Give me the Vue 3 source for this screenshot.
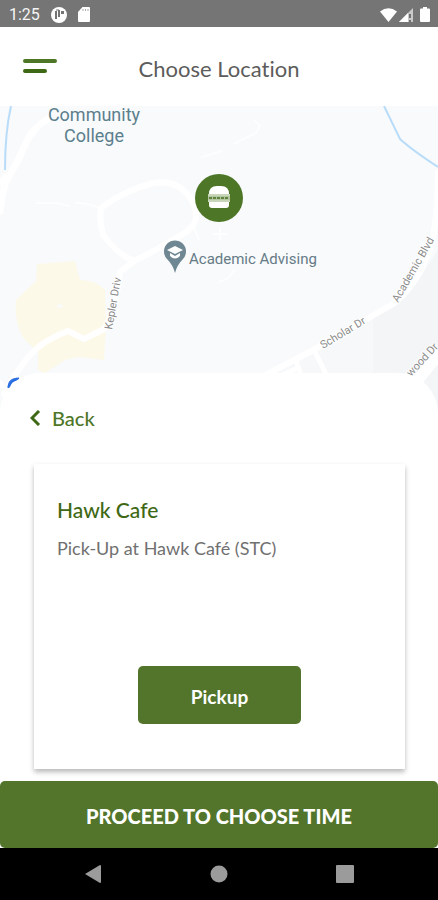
<script setup>
const place = {
  name: 'Hawk Cafe',
  detail: 'Pick-Up at Hawk Café (STC)'
}
</script>

<template>
  <div class="screen">
    <div class="status">
      <div class="group">
        <span class="clock">1:25</span>
        <svg width="16" height="16" viewBox="0 0 16 16" aria-hidden="true">
          <circle cx="8" cy="8" r="8" fill="#fff" />
          <path d="M5 4v8M8 3v7" stroke="#757575" stroke-width="2" fill="none" />
          <path d="M10 4h3v3h-3z" fill="#757575" />
          <path d="M5 3h3" stroke="#757575" stroke-width="1" />
        </svg>
        <svg width="12" height="15" viewBox="0 0 12 15" aria-hidden="true">
          <path d="M4.500 0H11a1 1 0 0 1 1 1v13a1 1 0 0 1-1 1H1a1 1 0 0 1-1-1V5z" fill="#fff" />
          <path d="M5 2v2M7.500 2v2M10 2v2" stroke="#aaa" />
        </svg>
      </div>
      <div class="group signals">
        <svg width="17" height="14" viewBox="0 0 17 14" aria-hidden="true">
          <path d="M0 3.500Q8.500-3 17 3.500L8.500 14z" fill="#fff" />
        </svg>
        <svg class="cell" width="14" height="14" viewBox="0 0 14 14" aria-hidden="true">
          <path d="M14 0v14H0z" fill="#c9c9c9" />
          <path d="M9 5v9H0z" fill="#fff" />
          <path d="M11 6v4M11 12v2" stroke="#707070" stroke-width="2" />
        </svg>
        <svg width="10" height="15" viewBox="0 0 10 15" aria-hidden="true">
          <path d="M3 0h4v1.500h2a1 1 0 0 1 1 1V14a1 1 0 0 1-1 1H1a1 1 0 0 1-1-1V2.500a1 1 0 0 1 1-1h2z" fill="#fff" />
        </svg>
      </div>
    </div>

    <header class="header">
      <button class="menu" type="button" aria-label="Menu">
        <span class="bar long"></span>
        <span class="bar short"></span>
      </button>
      <h1>Choose Location</h1>
    </header>

    <svg class="map" viewBox="0 106 438 304" preserveAspectRatio="xMidYMin slice" role="img" aria-label="Campus map">
      <rect y="106" width="438" height="304" fill="#f8fafc" />
      <path d="M373 317L392 306L416 284L438 250V410H373z" fill="#f3f5f7" />
      <path d="M268 377L315 353L373 317V410H268z" fill="#f6f8fa" />
      <path d="M37 264L75 261L80 280Q96 280 105 290L106 325L104 360L78 357L65 360L45 373L38 370V352L25 340Q14 325 16 300L36 281z" fill="#fdf9e9" />
      <path d="M56 306l5-2 2 2-4 2z" fill="#f8fafc" />
      <g fill="none" stroke="#fff" stroke-linejoin="round" stroke-linecap="round">
        <path d="M48 119Q32 128 25 145T8 178Q3 186 0 211" stroke-width="7" />
        <path d="M0 183l5-7" stroke-width="5" />
        <path d="M101 208Q123 191 153 183Q180 179 192 201T181 235Q159 249 134 261Q117 254 103 235Q99 218 101 208z" stroke-width="6" />
        <path d="M37 203h20l12 3M76 203q15 0 24 6M234 144l23-12 3-6-5-5M202 157l20-6M194 228l5 12M214 234h13M220 228v12M219 282q12-3 15-12" stroke-width="2" opacity=".7" />
        <path d="M134 261L120 272Q116 310 104 329L84 339L68 331Q45 340 35 350T15 375L4 394" stroke-width="6" />
        <path d="M0 383l10 10" stroke-width="6" />
        <path d="M264 376L315 349L365 320L393 304Q415 287 426 259Q437 240 438 173" stroke-width="6" />
        <path d="M296 360l5 16M314 350l13 26M280 376l18-8" stroke-width="5" />
        <path d="M400 402L445 347" stroke-width="11" />
      </g>
      <g fill="none" stroke="#b9dcf8" stroke-width="2">
        <path d="M11 106Q5 132 5 170" />
        <path d="M384 106L400 139Q412 150 438 167" />
      </g>
      <path d="M9 388Q9 379 19 379" fill="none" stroke="#2b6fe0" stroke-width="3" />
      <g class="poi" text-anchor="middle">
        <text x="94" y="121">Community</text>
        <text x="94" y="142">College</text>
      </g>
      <text class="poi small" x="189" y="264">Academic Advising</text>
      <g class="road">
        <text transform="translate(112 330) rotate(-80)">Kepler Driv</text>
        <text transform="translate(323 349) rotate(-31)">Scholar Dr</text>
        <text transform="translate(398 303) rotate(-60)">Academic Blvd</text>
        <text transform="translate(411 377) rotate(-47)">wood Dr</text>
      </g>
      <path d="M175 273Q173 265 167 259A11 11 0 1 1 183 259Q177 265 175 273z" fill="#6f8792" />
      <path d="M167 250L175 246L183 250L175 254z" fill="#fff" />
      <path d="M170 253L175 256L180 253V256Q175 261 170 256z" fill="#fff" />
      <circle cx="219" cy="198" r="24" fill="#4d7627" />
      <path d="M209 194Q209 186 217 186H221Q229 186 229 194z" fill="#fff" />
      <path d="M208 194h22v8h-22z" fill="#b4c6a1" />
      <path d="M208 195h22M208 201h22" stroke="#dce5d3" />
      <path d="M209 198h20" fill="none" stroke="#60833f" stroke-width="2" stroke-dasharray="3 1" />
      <path d="M209 202H229V205Q229 208 226 208H212Q209 208 209 205z" fill="#fff" />
    </svg>

    <main class="sheet">
      <button class="back" type="button">
        <svg width="11" height="16" viewBox="0 0 11 16" aria-hidden="true">
          <path d="M9 1L2 8l7 7" fill="none" stroke="#3e6814" stroke-width="3" />
        </svg>
        <span>Back</span>
      </button>
      <section class="card">
        <h2>{{ place.name }}</h2>
        <p>{{ place.detail }}</p>
        <button class="pickup" type="button">Pickup</button>
      </section>
    </main>

    <button class="proceed" type="button">PROCEED TO CHOOSE TIME</button>

    <nav class="system">
      <button type="button" aria-label="System back">
        <svg width="18" height="20" viewBox="0 0 18 20"><path d="M1 10L16 1q1 0 1 1v16q0 1-1 1z" fill="#9b9b9b" /></svg>
      </button>
      <button type="button" aria-label="Home">
        <svg width="18" height="18" viewBox="0 0 18 18"><circle cx="9" cy="9" r="8.500" fill="#9b9b9b" /></svg>
      </button>
      <button type="button" aria-label="Recent apps">
        <svg width="18" height="18" viewBox="0 0 18 18"><rect width="18" height="18" rx="1" fill="#9b9b9b" /></svg>
      </button>
    </nav>
  </div>
</template>

<style>
body {
  margin: 0;
  background: #fff;
}
</style>

<style scoped>
.screen {
  display: flex;
  flex-direction: column;
  min-height: 100vh;
  font-family: Lato, "Open Sans", sans-serif;
  font-variant-ligatures: none;
  background: #fff;
}
svg {
  display: block;
}
button {
  padding: 0;
  border: 0;
  background: none;
  font-family: inherit;
  cursor: pointer;
}
.status {
  display: flex;
  align-items: center;
  justify-content: space-between;
  height: 27px;
  padding: 2px 8px 0 9px;
  box-sizing: border-box;
  background: #757575;
}
.group {
  display: flex;
  align-items: center;
  gap: 11px;
}
.signals {
  gap: 7px;
}
.cell {
  margin-left: -5px;
}
.clock {
  color: #f4f4f4;
  font: 16px/20px Roboto, sans-serif;
}
.header {
  display: grid;
  grid-template-columns: 34px 1fr 34px;
  align-items: center;
  height: 79px;
  padding: 0 23px;
}
.menu {
  display: grid;
  gap: 6px;
  padding: 0 0 2px;
}
.bar {
  height: 4px;
  border-radius: 2px;
  background: #4d7627;
}
.short {
  width: 24px;
  background: #3e6814;
}
h1 {
  margin: 0;
  padding-top: 4px;
  color: #5c5c5c;
  font-size: 22px;
  font-weight: 400;
  line-height: 28px;
  text-align: center;
}
.map {
  width: 100%;
  height: 304px;
}
.poi {
  fill: #5c7f8c;
  font: 18px Roboto, sans-serif;
}
.small {
  fill: #667b86;
  font-size: 15px;
}
.road {
  fill: #8b8b8b;
  stroke: #fff;
  stroke-width: 2px;
  paint-order: stroke;
  font: 11px Roboto, sans-serif;
}
.sheet {
  position: relative;
  display: flex;
  flex: 1;
  flex-direction: column;
  align-items: flex-start;
  gap: 33px;
  margin-top: -37px;
  padding: 32px 33px 12px 34px;
  border-radius: 40px 40px 0 0;
  background: #fff;
}
.back {
  display: flex;
  align-items: center;
  gap: 11px;
  margin-left: -4px;
  color: #4d7627;
  font-size: 20px;
  font-weight: 500;
  line-height: 26px;
}
.card {
  display: flex;
  flex: 1;
  flex-direction: column;
  align-self: stretch;
  box-sizing: border-box;
  min-height: 305px;
  padding: 33px 23px 45px;
  background: #fff;
  box-shadow: 0 3px 5px rgb(0 0 0 / 28%);
}
h2 {
  margin: 0 0 12px;
  color: #3e6814;
  font-size: 21px;
  font-weight: 500;
  line-height: 26px;
}
p {
  margin: 0;
  color: #707070;
  font-size: 18px;
  line-height: 26px;
}
.pickup {
  align-self: center;
  width: 50%;
  height: 58px;
  margin-top: auto;
  padding-top: 3px;
  border-radius: 5px;
  background: #52752b;
  color: #fff;
  font-size: 19px;
  font-weight: 700;
}
.proceed {
  height: 67px;
  padding-top: 3px;
  border-radius: 5px;
  background: #52752b;
  color: #fff;
  font-size: 20px;
  font-weight: 900;
}
.system {
  display: grid;
  grid-template-columns: repeat(3, 126px);
  justify-content: center;
  height: 52px;
  background: #000;
}
.system button {
  display: grid;
  place-items: center;
}
</style>
